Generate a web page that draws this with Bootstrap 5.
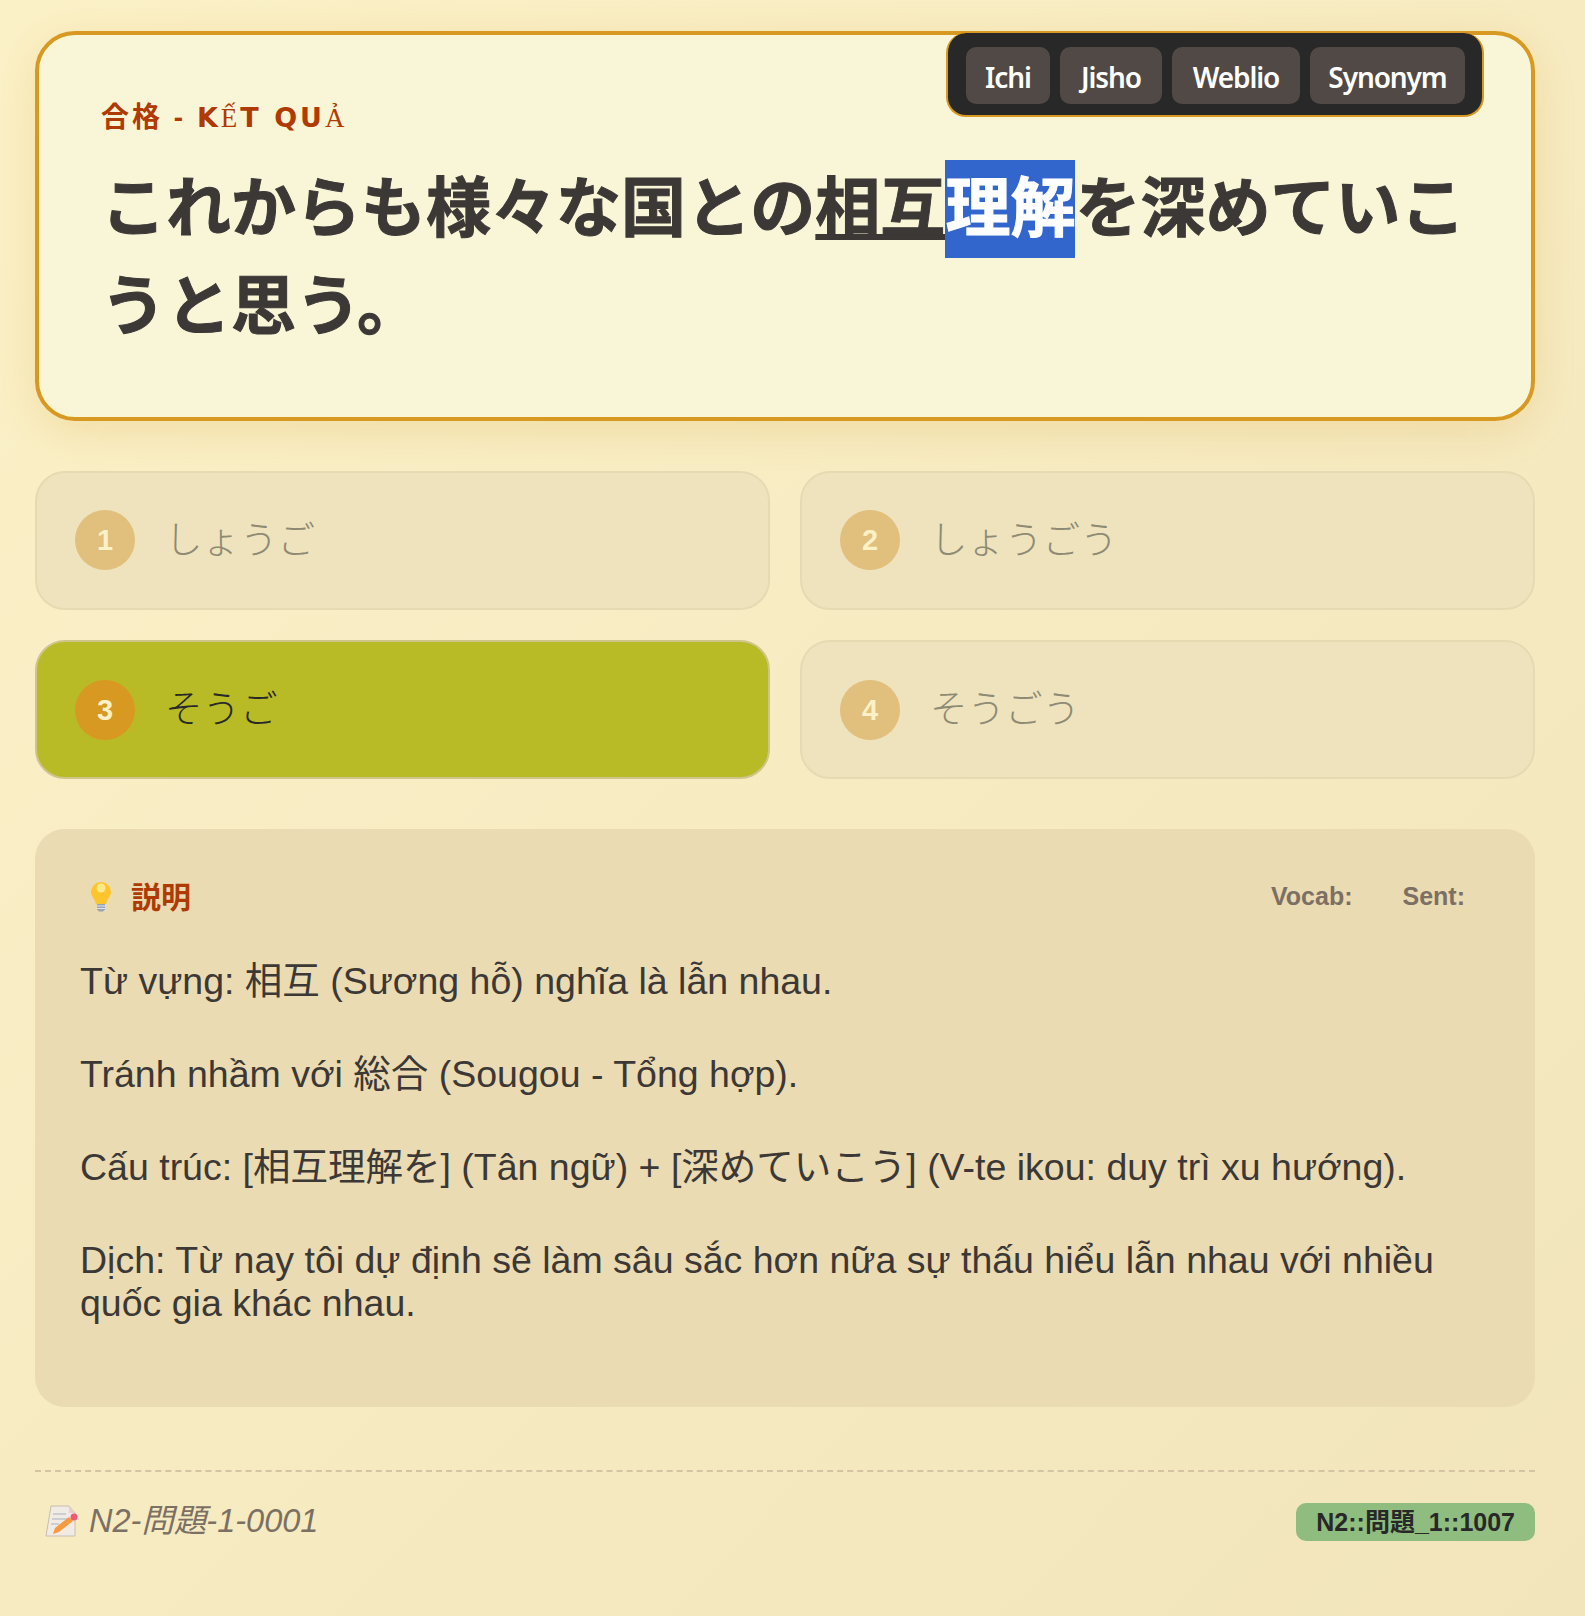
<!DOCTYPE html>
<html lang="ja">
<head>
<meta charset="utf-8">
<title>N2</title>
<link href="https://cdn.jsdelivr.net/npm/bootstrap@5.3.0/dist/css/bootstrap.min.css" rel="stylesheet">
<style>
html,body{height:100%}
body{min-height:1616px;background:linear-gradient(135deg,#fbf1c7 0%,#f2e5bc 100%);color:#3c3836;font-family:"Liberation Sans","Noto Sans CJK JP",sans-serif}
.sheet{width:1500px;margin-left:35px;padding-top:31px}
.qcard{position:relative;height:390px;background:#f9f5d7;border:4px solid #d79921;border-radius:40px;padding:67px 61px 61px 62px;box-shadow:0 10px 40px rgba(215,153,33,.2)}
.tools{position:absolute;top:-2px;right:47px;display:flex;gap:10px;padding:14px 17px 11px 18px;background:#282828;border:2px solid #d79921;border-top:0;border-radius:20px}
.tool{height:57px;border-radius:10px;background:#504945;color:#fff;font:600 28px "Noto Sans",sans-serif;letter-spacing:-1.1px;line-height:60px;text-align:center;text-decoration:none}
.tool:nth-child(1){width:84px}
.tool:nth-child(2){width:102px}
.tool:nth-child(3){width:128px}
.tool:nth-child(4){width:155px}
.eyebrow{height:32px;margin-bottom:26px;color:#af3a03;font-size:28px;font-weight:700;letter-spacing:3px;line-height:32px}
.latin{font-family:"DejaVu Sans",sans-serif;font-size:27px}
.eyebrow i{font-family:"Liberation Serif",serif;font-style:normal;font-weight:400}
.qtext{margin:0;font-size:65px;font-weight:700;line-height:97.500px;color:#3c3836;-webkit-text-stroke:1px currentColor}
.qtext u{text-underline-offset:3px}
.hit{background:#3366cc;color:#fff;display:inline-block}
.opts{--bs-gutter-x:30px;--bs-gutter-y:30.500px;margin-top:19px}
.opt{height:139px;display:flex;align-items:center;gap:30px;padding:0 38px;border:2px solid #e6dab2;border-radius:30px;background:#eee3bd;font-size:37.500px;font-weight:300;color:#8f8a74}
.opt-on{background:#b8bb26;border-color:#cfc48a;color:#282828}
.num{flex:none;width:60px;height:60px;border-radius:50%;background:#e0c07c;color:#fbf1c7;font:700 29px/60px "Liberation Sans",sans-serif;text-align:center}
.opt-on .num{background:#d79921}
.explain{margin-top:50px;height:578px;padding:45px;background:#ebdbb2;border-radius:30px}
.ehead{display:flex;align-items:center;height:44px;padding-top:2px}
.etitle{display:flex;align-items:center;gap:18px;padding-left:9px;color:#af3a03;font-size:30px;font-weight:700}
.metrics{margin-left:auto;margin-right:25px;display:flex;gap:50px;color:#7c6f64;font-size:25px;font-weight:700;margin-top:-1px}
.ebody{margin-top:42px;font-size:37.500px;line-height:43px;color:#3c3836}
.ebody p{margin:0 0 50px}
.foot{margin-top:63px;padding-top:25px;border-top:2px dashed #d5c4a1;display:flex;justify-content:space-between;align-items:center}
.fid{display:flex;align-items:center;gap:10px;padding-left:10px;font-size:32.500px;font-style:italic;color:#7c6f64}
.ftag{height:38px;margin-top:2px;padding:0 20px;border-radius:10px;background:#8fbc7f;color:#282828;font-size:25px;font-weight:700;line-height:38px}
</style>
</head>
<body>
<div class="sheet">
  <section class="qcard">
    <nav class="tools">
      <a class="tool" href="#">Ichi</a><a class="tool" href="#">Jisho</a><a class="tool" href="#">Weblio</a><a class="tool" href="#">Synonym</a>
    </nav>
    <div class="eyebrow">合格 - <span class="latin">K<i>Ế</i>T QU<i>Ả</i></span></div>
    <p class="qtext">これからも様々な国との<u>相互</u><span class="hit">理解</span>を深めていこうと思う。</p>
  </section>
  <div class="row row-cols-2 opts">
    <div class="col"><div class="opt"><span class="num">1</span><span>しょうご</span></div></div>
    <div class="col"><div class="opt"><span class="num">2</span><span>しょうごう</span></div></div>
    <div class="col"><div class="opt opt-on"><span class="num">3</span><span>そうご</span></div></div>
    <div class="col"><div class="opt"><span class="num">4</span><span>そうごう</span></div></div>
  </div>
  <section class="explain">
    <div class="ehead">
      <div class="etitle">
        <svg width="24" height="32" viewBox="0 0 24 32" aria-hidden="true"><path d="M12 1a10 10 0 0 0-10 10c0 4 3 6 4 9 .4 1.200.6 2 .8 3h10.400c.2-1 .4-1.800.8-3 1-3 4-5 4-9A10 10 0 0 0 12 1z" fill="#fdc42c"/><circle cx="12" cy="7" r="4.500" fill="#ffe88a"/><path d="M8 23h8v5.500l-2 2h-4l-2-2z" fill="#98a4b8"/><path d="M8 25h8M8 27.500h8" stroke="#e0e4ea" stroke-width="1"/></svg>
        <span>説明</span>
      </div>
      <div class="metrics"><span>Vocab:</span><span>Sent:</span></div>
    </div>
    <div class="ebody">
      <p>Từ vựng: 相互 (Sương hỗ) nghĩa là lẫn nhau.</p>
      <p>Tránh nhầm với 総合 (Sougou - Tổng hợp).</p>
      <p>Cấu trúc: [相互理解を] (Tân ngữ) + [深めていこう] (V-te ikou: duy trì xu hướng).</p>
      <p>Dịch: Từ nay tôi dự định sẽ làm sâu sắc hơn nữa sự thấu hiểu lẫn nhau với nhiều quốc gia khác nhau.</p>
    </div>
  </section>
  <footer class="foot">
    <div class="fid">
      <svg width="34" height="34" viewBox="0 0 34 34" aria-hidden="true"><path d="M6 2h18l6 7v23H1z" fill="#f1ebe6" stroke="#c9bcae" stroke-width="1"/><path d="M24 2v7h6z" fill="#e8cfc8"/><path d="M8 10h13M7 15h18M6 20h8" stroke="#aab0c0" stroke-width="1.200"/><path d="M8 30l2-6L24 13l4 4-14 11z" fill="#f59a3e"/><circle cx="29" cy="13" r="3.500" fill="#ec5a78"/></svg>
      <span>N2-問題-1-0001</span>
    </div>
    <div class="ftag">N2::問題_1::1007</div>
  </footer>
</div>
<script src="https://cdn.jsdelivr.net/npm/bootstrap@5.3.0/dist/js/bootstrap.bundle.min.js"></script>
</body>
</html>
